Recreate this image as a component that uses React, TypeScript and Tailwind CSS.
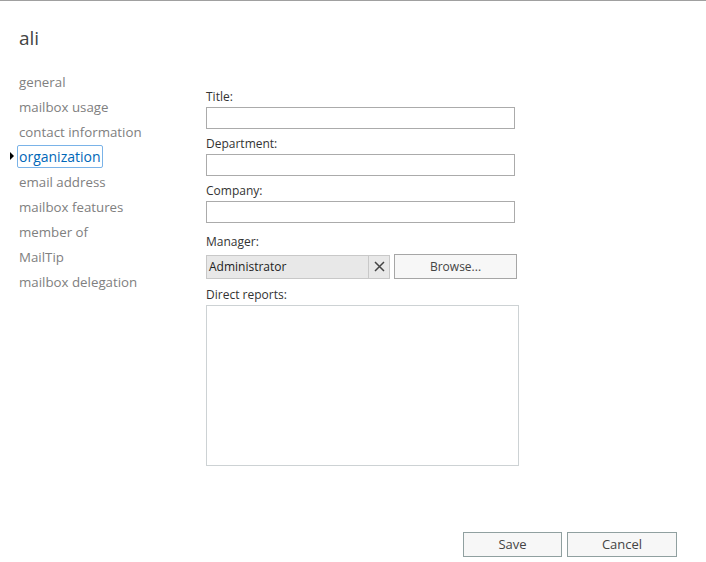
import React from "react";

const navItems = [
  "general",
  "mailbox usage",
  "contact information",
  "organization",
  "email address",
  "mailbox features",
  "member of",
  "MailTip",
  "mailbox delegation",
];

function Field({ label }: { label: string }) {
  return (
    <div className="mb-[7px]">
      <div className="h-[16px] text-[12px] leading-[16px] text-[#333]">{label}</div>
      <div className="mt-[2px] h-[22px] w-[309px] border border-[#ababab] bg-white" />
    </div>
  );
}

export default function App() {
  const selected = "organization";
  return (
    <div
      className="flex h-[562px] w-[706px] flex-col border-t border-[#a0a0a0] bg-white"
      style={{ fontFamily: '"Open Sans", "Noto Sans", sans-serif' }}
    >
      <div className="flex flex-1">
        {/* Left nav */}
        <div className="w-[206px] pl-[19px]">
          <div className="mt-[23px] h-[28px] text-[19px] leading-[28px] text-[#444]">ali</div>
          <ul className="mt-[17px]">
            {navItems.map((item) => (
              <li key={item} className="relative h-[25px]">
                {item === selected ? (
                  <>
                    <span className="absolute left-[-9px] top-[8px] h-0 w-0 border-y-[4px] border-l-[4px] border-y-transparent border-l-black" />
                    <span className="ml-[-2px] mt-[-2px] inline-block rounded-[2px] border border-[#7ab3e8] px-[1px] pt-[1px] text-[14px] leading-[20px] text-[#0067b8]">
                      {item}
                    </span>
                  </>
                ) : (
                  <span className="inline-block text-[13.3px] leading-[20px] text-[#808080]">{item}</span>
                )}
              </li>
            ))}
          </ul>
        </div>

        {/* Form */}
        <div className="pt-[88px]">
          <Field label="Title:" />
          <Field label="Department:" />
          <Field label="Company:" />
          <div className="mt-[11px]">
            <div className="h-[16px] text-[12px] leading-[16px] text-[#333]">Manager:</div>
            <div className="mt-[4px] flex items-center">
              <div className="flex h-[24px] w-[184px] items-center border border-[#c8c8c8] bg-[#e8e8e8]">
                <span className="flex-1 pl-[2px] pt-[1px] text-[12px] text-[#222]">Administrator</span>
                <span className="flex h-full w-[21px] items-center justify-center border-l border-[#c8c8c8]">
                  <svg width="11" height="11" viewBox="0 0 11 11">
                    <path d="M1 1L10 10M10 1L1 10" stroke="#444" strokeWidth="1.5" />
                  </svg>
                </span>
              </div>
              <button className="ml-[4px] h-[25px] w-[123px] border border-[#a6a6a6] bg-[#f7f7f7] text-[12px] text-[#444]">
                Browse...
              </button>
            </div>
          </div>
          <div className="mt-[8px]">
            <div className="h-[16px] text-[12px] leading-[16px] text-[#333]">Direct reports:</div>
            <div className="mt-[2px] h-[161px] w-[313px] border border-[#cdd2d4] bg-white" />
          </div>
        </div>
      </div>

      {/* Footer */}
      <div className="flex justify-end gap-[5px] pb-[5px] pr-[29px]">
        <button className="h-[25px] w-[99px] border border-[#90a0a0] bg-[#f7f7f7] pt-[1px] text-[13px] text-[#444]">
          Save
        </button>
        <button className="h-[25px] w-[110px] border border-[#90a0a0] bg-[#f7f7f7] pt-[1px] text-[13px] text-[#444]">
          Cancel
        </button>
      </div>
    </div>
  );
}
